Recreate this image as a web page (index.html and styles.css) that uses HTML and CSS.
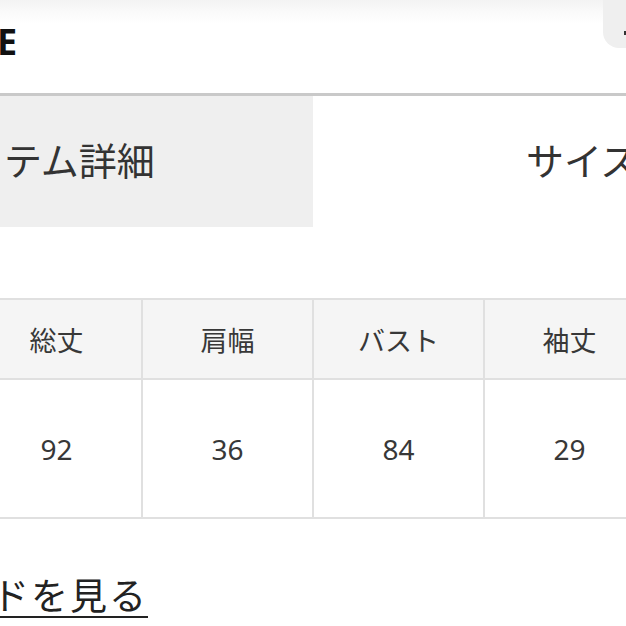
FILE: index.html
```html
<!DOCTYPE html>
<html lang="ja">
<head>
<meta charset="utf-8">
<link rel="stylesheet" href="styles.css">
</head>
<body>
<div class="page">
  <header class="topbar">
    <span class="logo">E</span>
    <div class="corner"><span class="corner-mark"></span></div>
  </header>
  <div class="divider"></div>
  <nav class="tabs">
    <div class="tab tab-active"><span class="tab-text tab-text-left">テム詳細</span></div>
    <div class="tab"><span class="tab-text tab-text-right">サイズガイド</span></div>
  </nav>
  <div class="table-wrap">
    <table class="size-table">
      <tr class="head">
        <th>総丈</th><th>肩幅</th><th>バスト</th><th>袖丈</th>
      </tr>
      <tr class="body">
        <td>92</td><td>36</td><td>84</td><td>29</td>
      </tr>
    </table>
  </div>
  <div class="link-row"><a class="guide-link" href="#">ドを見る</a></div>
</div>
</body>
</html>
```

FILE: styles.css
```css
html, body {
  margin: 0;
  padding: 0;
  background: #fff;
}
body {
  width: 626px;
  height: 626px;
  overflow: hidden;
  font-family: "Noto Sans CJK JP", "Noto Sans", sans-serif;
  color: #333;
}
.page {
  position: relative;
  width: 626px;
  overflow: hidden;
}
.topbar {
  position: relative;
  height: 93px;
  background: linear-gradient(to bottom, #f3f3f3 0px, #fafafa 12px, #ffffff 24px);
  display: flex;
  align-items: flex-start;
}
.logo {
  font-family: "Noto Sans", sans-serif;
  font-weight: 700;
  font-size: 36px;
  line-height: 36px;
  color: #111;
  margin-top: 24px;
  margin-left: -3px;
}
.corner {
  position: absolute;
  top: 0;
  right: -20px;
  width: 43px;
  height: 48px;
  background: #efefef;
  border-bottom-left-radius: 16px;
}
.corner-mark {
  position: absolute;
  left: 21px;
  top: 31px;
  width: 2px;
  height: 4px;
  background: #333;
}
.divider {
  height: 3px;
  background: #c9c9c9;
}
.tabs {
  display: flex;
  height: 131px;
}
.tab {
  width: 313px;
  flex: none;
  display: flex;
  align-items: center;
  overflow: hidden;
  white-space: nowrap;
}
.tab-active {
  background: #efefef;
}
.tab-text {
  font-size: 38px;
  line-height: 40px;
  color: #333;
  margin-top: -6px;
}
.tab-text-left {
  padding-left: 4px;
}
.tab-text-right {
  padding-left: 213px;
}
.table-wrap {
  margin-top: 71px;
  margin-left: -30px;
  width: 700px;
}
.size-table {
  border-collapse: collapse;
  table-layout: fixed;
  width: 686px;
}
.size-table th,
.size-table td {
  width: 169px;
  padding: 0;
  border: 2px solid #e0e0e0;
  text-align: center;
  font-weight: 400;
  color: #383838;
}
.size-table th {
  height: 78px;
  background: #f5f5f5;
  font-size: 27px;
}
.size-table td {
  height: 137px;
  background: #fff;
  font-size: 28px;
  font-family: "Noto Sans", "Noto Sans CJK JP", sans-serif;
}
.link-row {
  margin-top: 55px;
  margin-left: -8px;
  display: flex;
}
.guide-link {
  display: block;
  font-size: 37px;
  line-height: 41px;
  letter-spacing: 2px;
  color: #222;
  text-decoration: none;
  border-bottom: 2px solid #222;
  padding-bottom: 1px;
  white-space: nowrap;
}
```
